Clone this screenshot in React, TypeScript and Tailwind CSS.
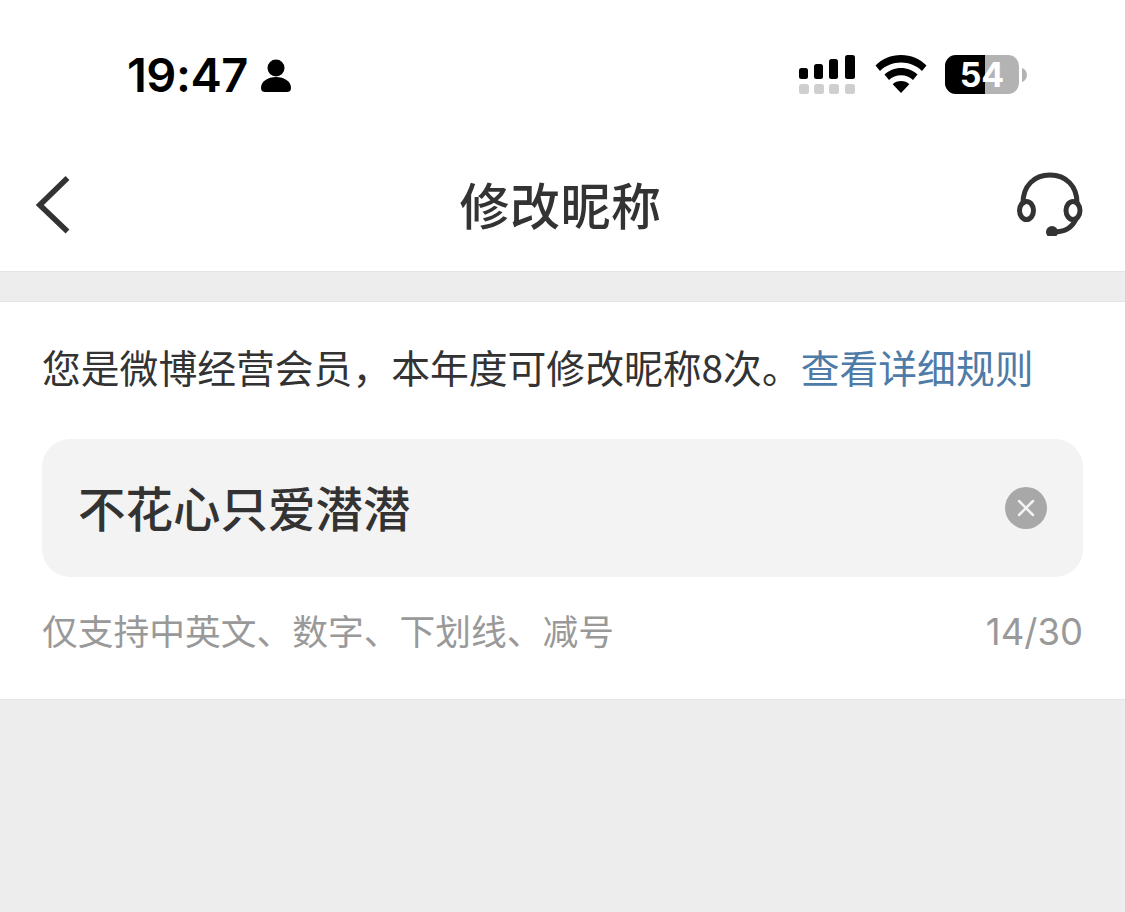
export default function App() {
  return (
    <div className="w-[1125px] h-[912px] overflow-hidden bg-[#ededed] flex flex-col font-['Noto_Sans_CJK_SC','Noto_Sans',sans-serif]">
      {/* status bar */}
      <div className="h-[140px] bg-white flex items-start pt-[50px] pl-[127px] pr-[98px] justify-between">
        <div className="flex items-center h-[50px]">
          <span className="font-['Inter',sans-serif] text-[47px] leading-[50px] font-semibold text-black tracking-[-0.5px]">19:47</span>
          <svg className="ml-[12px] mt-[1px]" width="32" height="34" viewBox="0 0 32 34" fill="#000">
            <circle cx="16" cy="9" r="8.5" />
            <path d="M1 29c0-7 7-11 15-11s15 4 15 11c0 3-2 4-4 4H5c-2 0-4-1-4-4z" />
          </svg>
        </div>
        <div className="flex items-start mt-[5px]">
          <svg width="58" height="40" viewBox="0 0 58 40">
            <rect x="0" y="13" width="9" height="11" rx="2.5" fill="#000" />
            <rect x="15" y="9" width="9" height="15" rx="2.5" fill="#000" />
            <rect x="30" y="4" width="9" height="20" rx="2.5" fill="#000" />
            <rect x="46" y="0" width="10" height="24" rx="2.5" fill="#000" />
            <rect x="0" y="29" width="10" height="10" rx="2.5" fill="#cfcfcf" />
            <rect x="15" y="29" width="10" height="10" rx="2.5" fill="#cfcfcf" />
            <rect x="30" y="29" width="10" height="10" rx="2.5" fill="#cfcfcf" />
            <rect x="46" y="29" width="10" height="10" rx="2.5" fill="#cfcfcf" />
          </svg>
          <svg className="ml-[18px]" width="52" height="38" viewBox="0 0 52 38" fill="#000">
            <path d="M26 0C16 0 7 4 .5 10.500L5 16C10.500 10.500 18 7.500 26 7.500S41.500 10.500 47 16L51.500 10.500C45 4 36 0 26 0z" />
            <path d="M26 13c-6.500 0-12 2.500-16.500 6.500L14 25c3-3 7.500-4.800 12-4.800S35 22 38 25l4.500-5.500C38 15.500 32.500 13 26 13z" />
            <path d="M26 26c-3.300 0-6.200 1.200-8.300 3.200L26 38l8.300-8.800C32.200 27.200 29.300 26 26 26z" />
          </svg>
          <div className="relative ml-[18px] w-[74px] h-[39px] rounded-[11px] overflow-hidden bg-[#b3b3b3] flex">
            <div className="w-[40px] h-full bg-black" />
            <span className="absolute inset-0 flex items-center justify-center font-['Inter',sans-serif] text-[34px] font-bold text-white">54</span>
          </div>
          <svg className="ml-[3px] mt-[13px]" width="5" height="14" viewBox="0 0 5 14" fill="#b3b3b3">
            <path d="M0 0c3 1 5 4 5 7s-2 6-5 7z" />
          </svg>
        </div>
      </div>

      {/* nav */}
      <div className="h-[132px] bg-white grid grid-cols-[1fr_auto_1fr] items-center pl-[36px] pr-[42px] border-b border-[#e4e4e4]">
        <svg className="mt-[-1px]" width="34" height="58" viewBox="0 0 34 58" fill="none" stroke="#333" strokeWidth="5.5">
          <path d="M31.500 2 L3.800 29 L31.500 55.500" />
        </svg>
        <span className="text-[50px] leading-[60px] font-medium text-[#333] mt-[-6px] ml-[2px] tracking-[0.5px]">修改昵称</span>
        <svg className="justify-self-end mt-[-3px]" width="66" height="64" viewBox="0 0 66 64" fill="none" stroke="#333" strokeWidth="5" strokeLinecap="round">
          <path d="M6 31C6 14 17 3 33 3s27 11 27 28" />
          <ellipse cx="9.500" cy="38.500" rx="7" ry="9" />
          <ellipse cx="56" cy="38.500" rx="7" ry="9" />
          <path d="M59 47c-4 9-11 13-22 13" />
          <circle cx="35" cy="60" r="3.500" fill="#333" stroke="#333" />
        </svg>
      </div>

      {/* grey strip */}
      <div className="h-[29px] shrink-0" />

      {/* panel */}
      <div className="h-[399px] bg-white border-t border-b border-[#e4e4e4] px-[42px] flex flex-col">
        <p className="mt-[39px] text-[38.8px] leading-[50px] text-[#333] whitespace-nowrap">
          您是微博经营会员，本年度可修改昵称8次。<span className="text-[#4f7ba8]">查看详细规则</span>
        </p>
        <div className="mt-[48px] h-[138px] rounded-[28px] bg-[#f3f3f3] flex items-center justify-between pl-[36px] pr-[36px]">
          <span className="text-[47.5px] leading-[60px] font-medium text-[#333] mt-[-3px]">不花心只爱潜潜</span>
          <div className="w-[42px] h-[42px] rounded-full bg-[#a8a8a8] flex items-center justify-center mt-[-1px]">
            <svg width="18" height="18" viewBox="0 0 18 18" stroke="#f3f3f3" strokeWidth="2.500" strokeLinecap="round">
              <path d="M2 2L16 16M16 2L2 16" />
            </svg>
          </div>
        </div>
        <div className="mt-[26px] flex items-center justify-between text-[#999]">
          <span className="text-[35.75px] leading-[50px] whitespace-nowrap">仅支持中英文、数字、下划线、减号</span>
          <span className="font-['Inter',sans-serif] text-[36.5px] leading-[50px] mt-[4px]">14/30</span>
        </div>
      </div>
    </div>
  )
}
